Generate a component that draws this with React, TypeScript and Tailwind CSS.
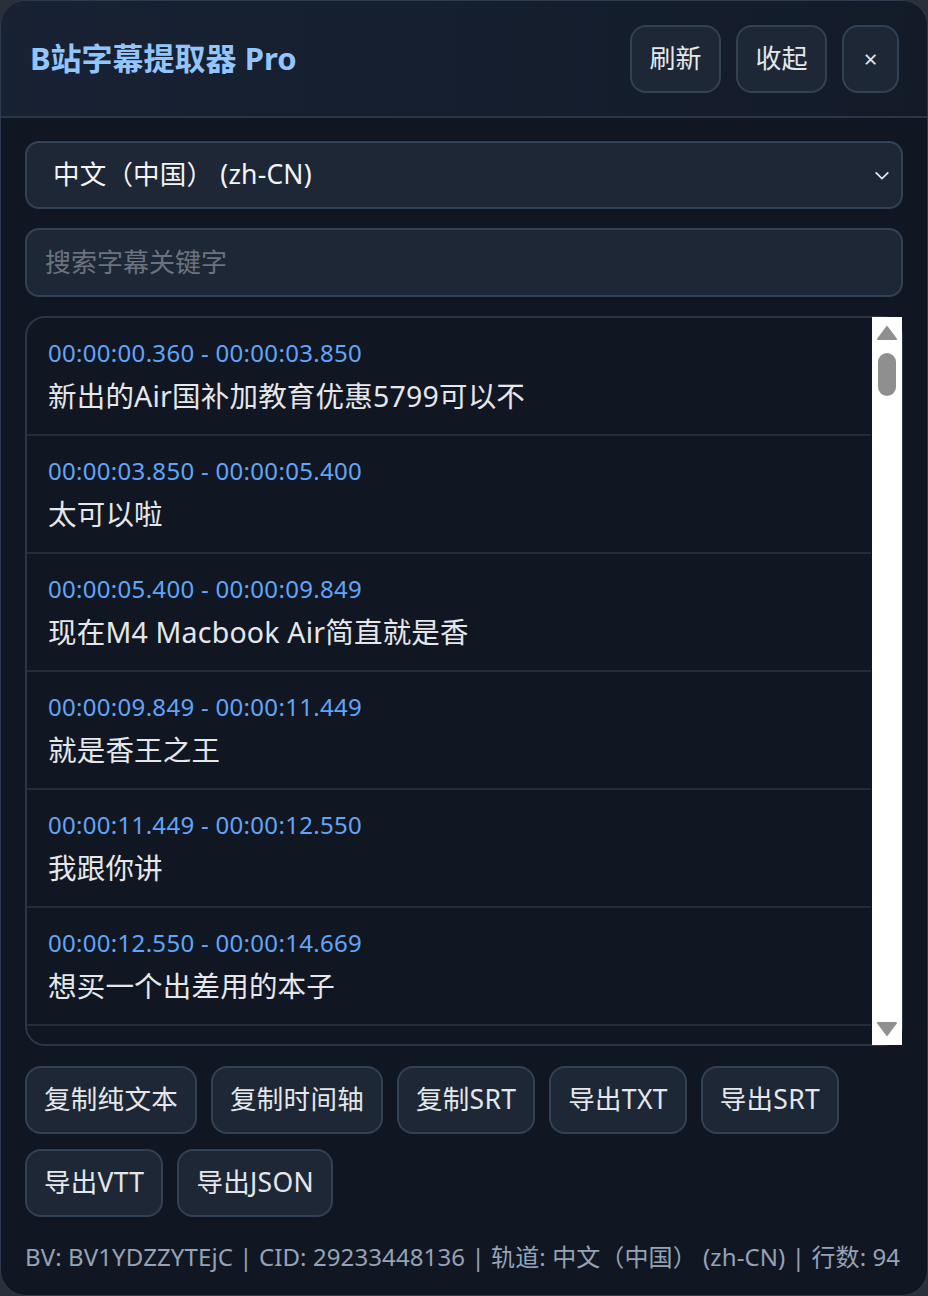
import React from "react";

const items = [
  ["00:00:00.360 - 00:00:03.850", "新出的Air国补加教育优惠5799可以不"],
  ["00:00:03.850 - 00:00:05.400", "太可以啦"],
  ["00:00:05.400 - 00:00:09.849", "现在M4 Macbook Air简直就是香"],
  ["00:00:09.849 - 00:00:11.449", "就是香王之王"],
  ["00:00:11.449 - 00:00:12.550", "我跟你讲"],
  ["00:00:12.550 - 00:00:14.669", "想买一个出差用的本子"],
  ["00:00:14.669 - 00:00:16.270", "这个可以吗"],
];

const actions = ["复制纯文本", "复制时间轴", "复制SRT", "导出TXT", "导出SRT", "导出VTT", "导出JSON"];

export default function App() {
  return (
    <div
      className="w-[928px] h-[1296px] bg-[#2a303a] overflow-hidden"
      style={{ fontFamily: '"Noto Sans", "Noto Sans CJK SC", sans-serif' }}
    >
      <div className="w-full h-full rounded-[26px] border border-[#2e3a4d] bg-[#111722] flex flex-col overflow-hidden">
        <div className="h-[117px] shrink-0 flex items-center justify-between pl-[29px] pr-[28px] bg-gradient-to-r from-[#182234] to-[#131b29] border-b-2 border-[#2a3546]">
          <div className="text-[31px] font-bold text-[#93c5fd]">B站字幕提取器 Pro</div>
          <div className="flex gap-[15px]">
            <button className="h-[68px] w-[91px] rounded-[16px] border-2 border-[#334155] bg-[#1e2735] text-[26px] text-[#e5e7eb]">刷新</button>
            <button className="h-[68px] w-[91px] rounded-[16px] border-2 border-[#334155] bg-[#1e2735] text-[26px] text-[#e5e7eb]">收起</button>
            <button className="h-[68px] w-[57px] rounded-[16px] border-2 border-[#334155] bg-[#1e2735] text-[24px] text-[#e5e7eb]">×</button>
          </div>
        </div>
        <div className="flex-1 flex flex-col px-[24px] pt-[23px]">
          <div className="h-[68px] rounded-[14px] border-2 border-[#334155] bg-[#1e2735] flex items-center justify-between pl-[26px] pr-[10px]">
            <span className="text-[26.5px] text-[#f3f4f6] whitespace-pre tracking-[0.2px]">中文（中国） (zh-CN)</span>
            <svg width="18" height="18" viewBox="0 0 20 20" fill="none" stroke="#e5e7eb" strokeWidth="2">
              <path d="M3 7l7 7 7-7" />
            </svg>
          </div>
          <div className="mt-[19px] h-[69px] rounded-[14px] border-2 border-[#334155] bg-[#1e2735] flex items-center pl-[18px]">
            <span className="text-[26px] text-[#6b7280]">搜索字幕关键字</span>
          </div>
          <div className="mt-[19px] h-[730px] relative rounded-[20px] border-2 border-[#2a3546] bg-[#111722]">
            <div className="absolute inset-0 overflow-hidden rounded-l-[18px] pr-[30px]">
              {items.map(([t, s], i) => (
                <div key={i} className="border-b-2 border-[#232d3c] pl-[21px] pt-[18px] pb-[18px]">
                  <div className="text-[24px] leading-[34px] tracking-[0.3px] text-[#60a5fa]">{t}</div>
                  <div className="mt-[6px] text-[28.5px] leading-[40px] tracking-[0.2px] text-[#e5e7eb]">{s}</div>
                </div>
              ))}
            </div>
            <div className="absolute top-[-1px] bottom-[-1px] right-[-1px] w-[30px] bg-white flex flex-col items-center">
              <svg className="mt-[9px]" width="20" height="14" viewBox="0 0 20 14">
                <path d="M10 1 L19 13 L1 13 Z" fill="#8f8f8f" stroke="#8f8f8f" strokeWidth="2" strokeLinejoin="round" />
              </svg>
              <div className="mt-[13px] w-[18px] h-[43px] rounded-full bg-[#8f8f8f]" />
              <div className="flex-1" />
              <svg className="mb-[9px]" width="20" height="14" viewBox="0 0 20 14">
                <path d="M1 1 L19 1 L10 13 Z" fill="#8f8f8f" stroke="#8f8f8f" strokeWidth="2" strokeLinejoin="round" />
              </svg>
            </div>
          </div>
          <div className="mt-[20px] flex flex-wrap gap-x-[14px] gap-y-[15px]">
            {actions.map((a) => (
              <button key={a} className="h-[68px] px-[17px] rounded-[16px] border-2 border-[#334155] bg-[#1e2735] text-[26.5px] tracking-[0.3px] text-[#e5e7eb] whitespace-nowrap">
                {a}
              </button>
            ))}
          </div>
          <div className="mt-[22px] text-[24px] text-[#94a3b8] whitespace-pre tracking-[0.1px]">
            BV: BV1YDZZYTEjC | CID: 29233448136 | 轨道: 中文（中国） (zh-CN) | 行数: 94
          </div>
        </div>
      </div>
    </div>
  );
}
